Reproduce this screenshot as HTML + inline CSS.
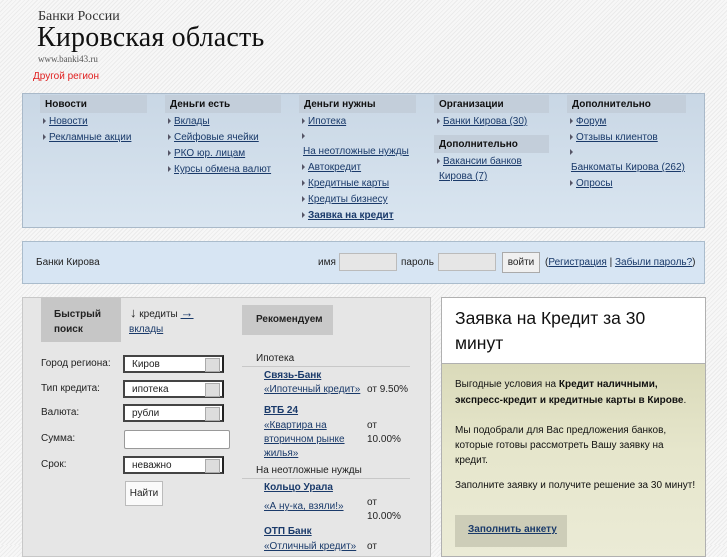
<!DOCTYPE html>
<html><head><meta charset="utf-8"><style>
*{margin:0;padding:0;box-sizing:border-box}
body{width:727px;height:545px;overflow:hidden;position:relative;font-family:"Liberation Sans","DejaVu Sans",sans-serif;font-size:10px;color:#222;
background:#f4f4f4 repeating-linear-gradient(135deg,#f7f7f7 0,#f7f7f7 2px,#ebebeb 2px,#ebebeb 3px)}
.a{position:absolute;white-space:nowrap}
a{color:#1a3a6a;text-decoration:underline}
.serif{font-family:"Liberation Serif",serif}
.nav{position:absolute;left:22px;top:93px;width:683px;height:135px;border:1px solid #a9b9c9;background:linear-gradient(#c9d7e5,#d9e5f0)}
.h{position:absolute;height:18px;background:#c3ceda;font-weight:bold;padding:4px 0 0 5px;color:#111}
.li{position:absolute;white-space:nowrap}
.li:before{content:"";display:inline-block;border-left:3px solid #556;border-top:3px solid transparent;border-bottom:3px solid transparent;margin-right:3px}
.inp{position:absolute;background:#e6e6e6;border:1px solid #bbb}
.sel{position:absolute;width:101px;height:18px;background:#fff;border:2px solid #444;border-right-color:#222;padding:2px 0 0 7px}
.sel:after{content:"";position:absolute;right:2px;top:1px;width:13px;height:12px;background:#ddd;border:1px solid #aaa}
.lbl{position:absolute}
</style></head><body>
<div class="a serif" style="left:38px;top:9px;font-size:14px;color:#333">Банки России</div>
<div class="a serif" style="left:37px;top:22px;font-size:28px;color:#111;letter-spacing:0.2px">Кировская область</div>
<div class="a serif" style="left:38px;top:54px;font-size:9px;color:#555">www.banki43.ru</div>
<div class="a" style="left:33px;top:71px;color:#e02020">Другой регион</div>

<div class="nav"></div>
<div class="h" style="left:40px;top:95px;width:107px">Новости</div>
<div class="li" style="left:43px;top:116px"><a>Новости</a></div>
<div class="li" style="left:43px;top:132px"><a>Рекламные акции</a></div>

<div class="h" style="left:165px;top:95px;width:116px">Деньги есть</div>
<div class="li" style="left:168px;top:116px"><a>Вклады</a></div>
<div class="li" style="left:168px;top:132px"><a>Сейфовые ячейки</a></div>
<div class="li" style="left:168px;top:148px"><a>РКО юр. лицам</a></div>
<div class="li" style="left:168px;top:164px"><a>Курсы обмена валют</a></div>

<div class="h" style="left:299px;top:95px;width:117px">Деньги нужны</div>
<div class="li" style="left:302px;top:116px"><a>Ипотека</a></div>
<div class="li" style="left:302px;top:131px"></div>
<div class="a" style="left:303px;top:146px"><a>На неотложные нужды</a></div>
<div class="li" style="left:302px;top:162px"><a>Автокредит</a></div>
<div class="li" style="left:302px;top:178px"><a>Кредитные карты</a></div>
<div class="li" style="left:302px;top:194px"><a>Кредиты бизнесу</a></div>
<div class="li" style="left:302px;top:210px"><a style="font-weight:bold">Заявка на кредит</a></div>

<div class="h" style="left:434px;top:95px;width:115px">Организации</div>
<div class="li" style="left:437px;top:116px"><a>Банки Кирова (30)</a></div>
<div class="h" style="left:434px;top:135px;width:115px">Дополнительно</div>
<div class="li" style="left:437px;top:156px"><a>Вакансии банков</a></div>
<div class="a" style="left:439px;top:171px"><a>Кирова (7)</a></div>

<div class="h" style="left:567px;top:95px;width:119px">Дополнительно</div>
<div class="li" style="left:570px;top:116px"><a>Форум</a></div>
<div class="li" style="left:570px;top:132px"><a>Отзывы клиентов</a></div>
<div class="li" style="left:570px;top:147px"></div>
<div class="a" style="left:571px;top:162px"><a>Банкоматы Кирова (262)</a></div>
<div class="li" style="left:570px;top:178px"><a>Опросы</a></div>

<div style="position:absolute;left:22px;top:241px;width:683px;height:43px;background:#d7e5f3;border:1px solid #aabccc"></div>
<div class="a" style="left:36px;top:257px">Банки Кирова</div>
<div class="a" style="left:318px;top:257px">имя</div>
<div class="inp" style="left:339px;top:253px;width:58px;height:18px"></div>
<div class="a" style="left:401px;top:257px">пароль</div>
<div class="inp" style="left:438px;top:253px;width:58px;height:18px"></div>
<div class="a" style="left:502px;top:252px;width:38px;height:21px;background:#f0f0f0;border:1px solid #aaa;padding-top:4px;text-align:center">войти</div>
<div class="a" style="left:545px;top:257px">(<a>Регистрация</a> | <a>Забыли пароль?</a>)</div>

<div style="position:absolute;left:22px;top:297px;width:409px;height:260px;background:#e6e6e6;border:1px solid #c8c8c8"></div>
<div class="a" style="left:41px;top:298px;width:80px;height:44px;background:#c6c6c6;font-weight:bold;padding:9px 0 0 13px;line-height:15px;white-space:normal">Быстрый поиск</div>
<div class="a" style="left:130px;top:305px;font-size:10px"><b style="font-size:13px">↓</b> кредиты <a style="font-size:13px;font-weight:bold;text-decoration:underline">→</a></div>
<div class="a" style="left:129px;top:324px"><a>вклады</a></div>
<div class="a" style="left:242px;top:305px;width:91px;height:30px;background:#c9c9c9;font-weight:bold;padding:9px 0 0 14px">Рекомендуем</div>

<div class="lbl" style="left:41px;top:358px">Город региона:</div>
<div class="sel" style="left:123px;top:355px">Киров</div>
<div class="lbl" style="left:41px;top:383px">Тип кредита:</div>
<div class="sel" style="left:123px;top:380px">ипотека</div>
<div class="lbl" style="left:41px;top:407px">Валюта:</div>
<div class="sel" style="left:123px;top:404px">рубли</div>
<div class="lbl" style="left:41px;top:433px">Сумма:</div>
<div class="a" style="left:124px;top:430px;width:106px;height:19px;background:#fff;border:1px solid #999;border-radius:2px"></div>
<div class="lbl" style="left:41px;top:459px">Срок:</div>
<div class="sel" style="left:123px;top:456px">неважно</div>
<div class="a" style="left:125px;top:481px;width:38px;height:25px;background:#fafafa;border:1px solid #bbb;padding-top:6px;text-align:center">Найти</div>

<div class="a" style="left:256px;top:353px">Ипотека</div>
<div class="a" style="left:242px;top:366px;width:168px;border-top:1px solid #c8c8c8"></div>
<div class="a" style="left:264px;top:370px"><a style="font-weight:bold">Связь-Банк</a></div>
<div class="a" style="left:264px;top:384px"><a>«Ипотечный кредит»</a></div>
<div class="a" style="left:367px;top:384px">от 9.50%</div>
<div class="a" style="left:264px;top:405px"><a style="font-weight:bold">ВТБ 24</a></div>
<div class="a" style="left:264px;top:419px;line-height:14px"><a>«Квартира на<br>вторичном рынке<br>жилья»</a></div>
<div class="a" style="left:367px;top:419px;line-height:14px">от<br>10.00%</div>
<div class="a" style="left:256px;top:465px">На неотложные нужды</div>
<div class="a" style="left:242px;top:478px;width:168px;border-top:1px solid #c8c8c8"></div>
<div class="a" style="left:264px;top:482px"><a style="font-weight:bold">Кольцо Урала</a></div>
<div class="a" style="left:264px;top:501px"><a>«А ну-ка, взяли!»</a></div>
<div class="a" style="left:367px;top:496px;line-height:14px">от<br>10.00%</div>
<div class="a" style="left:264px;top:526px"><a style="font-weight:bold">ОТП Банк</a></div>
<div class="a" style="left:264px;top:541px"><a>«Отличный кредит»</a></div>
<div class="a" style="left:367px;top:541px">от</div>

<div style="position:absolute;left:441px;top:297px;width:265px;height:260px;border:1px solid #b0b0b0;background:linear-gradient(#d1d1ac,#e6e6cc 60%,#ebebd6)"></div>
<div class="a" style="left:442px;top:298px;width:263px;height:66px;background:#fff;border-bottom:1px solid #b0b0b0"></div>
<div class="a" style="left:455px;top:306px;font-size:17.5px;line-height:25px;white-space:normal;width:210px;color:#111">Заявка на Кредит за 30 минут</div>
<div class="a" style="left:455px;top:377px;line-height:16px;white-space:normal;width:245px;color:#111">Выгодные условия на <b>Кредит наличными, экспресс-кредит и кредитные карты в Кирове</b>.</div>
<div class="a" style="left:455px;top:423px;line-height:15px;white-space:normal;width:232px;color:#111">Мы подобрали для Вас предложения банков, которые готовы рассмотреть Вашу заявку на кредит.</div>
<div class="a" style="left:455px;top:480px;color:#111">Заполните заявку и получите решение за 30 минут!</div>
<div class="a" style="left:455px;top:515px;width:112px;height:32px;background:#cdcdb8;padding:9px 0 0 13px"><a style="font-weight:bold">Заполнить анкету</a></div>
</body></html>
